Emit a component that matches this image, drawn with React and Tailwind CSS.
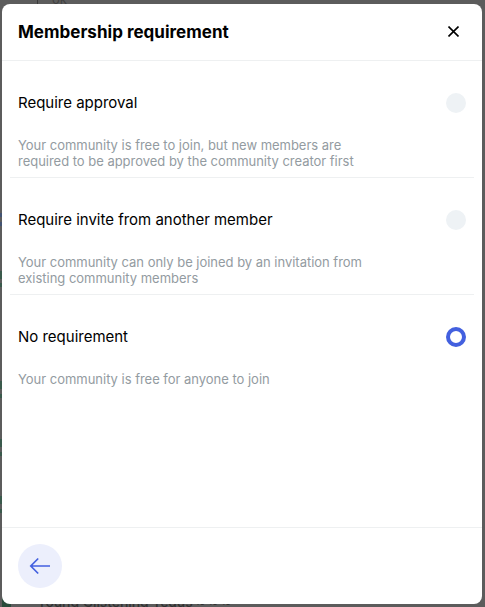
const OPTIONS = [
  {
    title: "Require approval",
    lines: [
      "Your community is free to join, but new members are",
      "required to be approved by the community creator first",
    ],
  },
  {
    title: "Require invite from another member",
    lines: [
      "Your community can only be joined by an invitation from",
      "existing community members",
    ],
  },
  {
    title: "No requirement",
    lines: ["Your community is free for anyone to join"],
    selected: true,
  },
];

function Option({ title, lines, selected }) {
  return (
    <div
      className={
        selected
          ? "h-[117px] px-2 pt-8"
          : "h-[117px] border-b border-[#eef0f1] px-2 pt-8"
      }
    >
      <div className="flex h-5 items-center justify-between">
        <span className="text-[15px] leading-5 tracking-[-0.01px]">{title}</span>
        <span
          className={
            selected
              ? "size-5 rounded-full border-4 border-[#4360df]"
              : "size-5 rounded-full bg-[#eef2f5]"
          }
        />
      </div>
      <p className="mt-6 text-[13px] leading-4 tracking-[-0.02px] text-[#939ba1]">
        {lines.map((line) => (
          <span key={line} className="block whitespace-nowrap">
            {line}
          </span>
        ))}
      </p>
    </div>
  );
}

/* Dimmed page behind the dialog; only its edges stay visible. */
function Backdrop() {
  return (
    <div aria-hidden="true" className="absolute inset-0 flex flex-col overflow-hidden">
      <div className="flex h-4 gap-3.5 pl-[37px] text-[13px] leading-4 text-[#414141]">
        <div className="w-px bg-[#3a3a3a]" />
        <span className="-mt-[9px]">ok</span>
      </div>
      <div className="flex w-2 flex-1 flex-col pt-[197px]">
        <div className="h-[13px] border-y-4 border-[#435372]" />
        <div className="mt-[45px] h-4 border-t-8 border-b-4 border-[#3a5a4c]" />
        <div className="mt-[94px] h-[17px] border-t-8 border-b-4 border-[#3a5a4c]" />
        <div className="mt-[41px] h-[17px] border-t-8 border-b-4 border-[#3a5a4c]" />
        <div className="mt-10 h-[17px] border-t-8 border-b-4 border-[#3a5a4c]" />
      </div>
      <div className="-mb-[5px] flex items-center gap-[26px] pl-0.5">
        <div className="size-[9px] bg-[#294b3b]" />
        <span className="text-[14px] leading-5 font-medium tracking-[-0.1px] whitespace-nowrap text-[#333333]">
          Young Glistening Tequs ~ ~ ~
        </span>
      </div>
    </div>
  );
}

export default function App() {
  return (
    <div className="relative h-[607px] w-[485px] overflow-hidden bg-[#5c5c5c] pt-1 pl-0.5 font-['Inter',sans-serif] text-black">
      <Backdrop />
      <div className="relative flex h-[600px] w-[480px] flex-col rounded-lg bg-white">
        <header className="flex h-[57px] shrink-0 items-center justify-between border-b border-[#eef0f1] px-4">
          <h1 className="text-[17px] leading-[22px] font-[650] tracking-[0.02px]">Membership requirement</h1>
          <button aria-label="Close" className="mr-[7px] mb-px">
            <svg width="11" height="11" viewBox="0 0 11 11" fill="none" stroke="#000" strokeWidth="1.6">
              <path d="M.5.5l10 10M10.5.5l-10 10" />
            </svg>
          </button>
        </header>
        <main className="flex-1 px-2">
          {OPTIONS.map((option) => (
            <Option key={option.title} {...option} />
          ))}
        </main>
        <footer className="flex h-[77px] shrink-0 items-center border-t border-[#eef0f1] px-4">
          <button
            aria-label="Back"
            className="flex size-11 items-center justify-center rounded-full bg-[#eceffc]"
          >
            <svg width="22" height="18" viewBox="0 0 22 18" fill="none" stroke="#4360df" strokeWidth="1.7">
              <path d="M21 9H2M9.2 1.5L1.8 9l7.4 7.5" />
            </svg>
          </button>
        </footer>
      </div>
    </div>
  );
}
